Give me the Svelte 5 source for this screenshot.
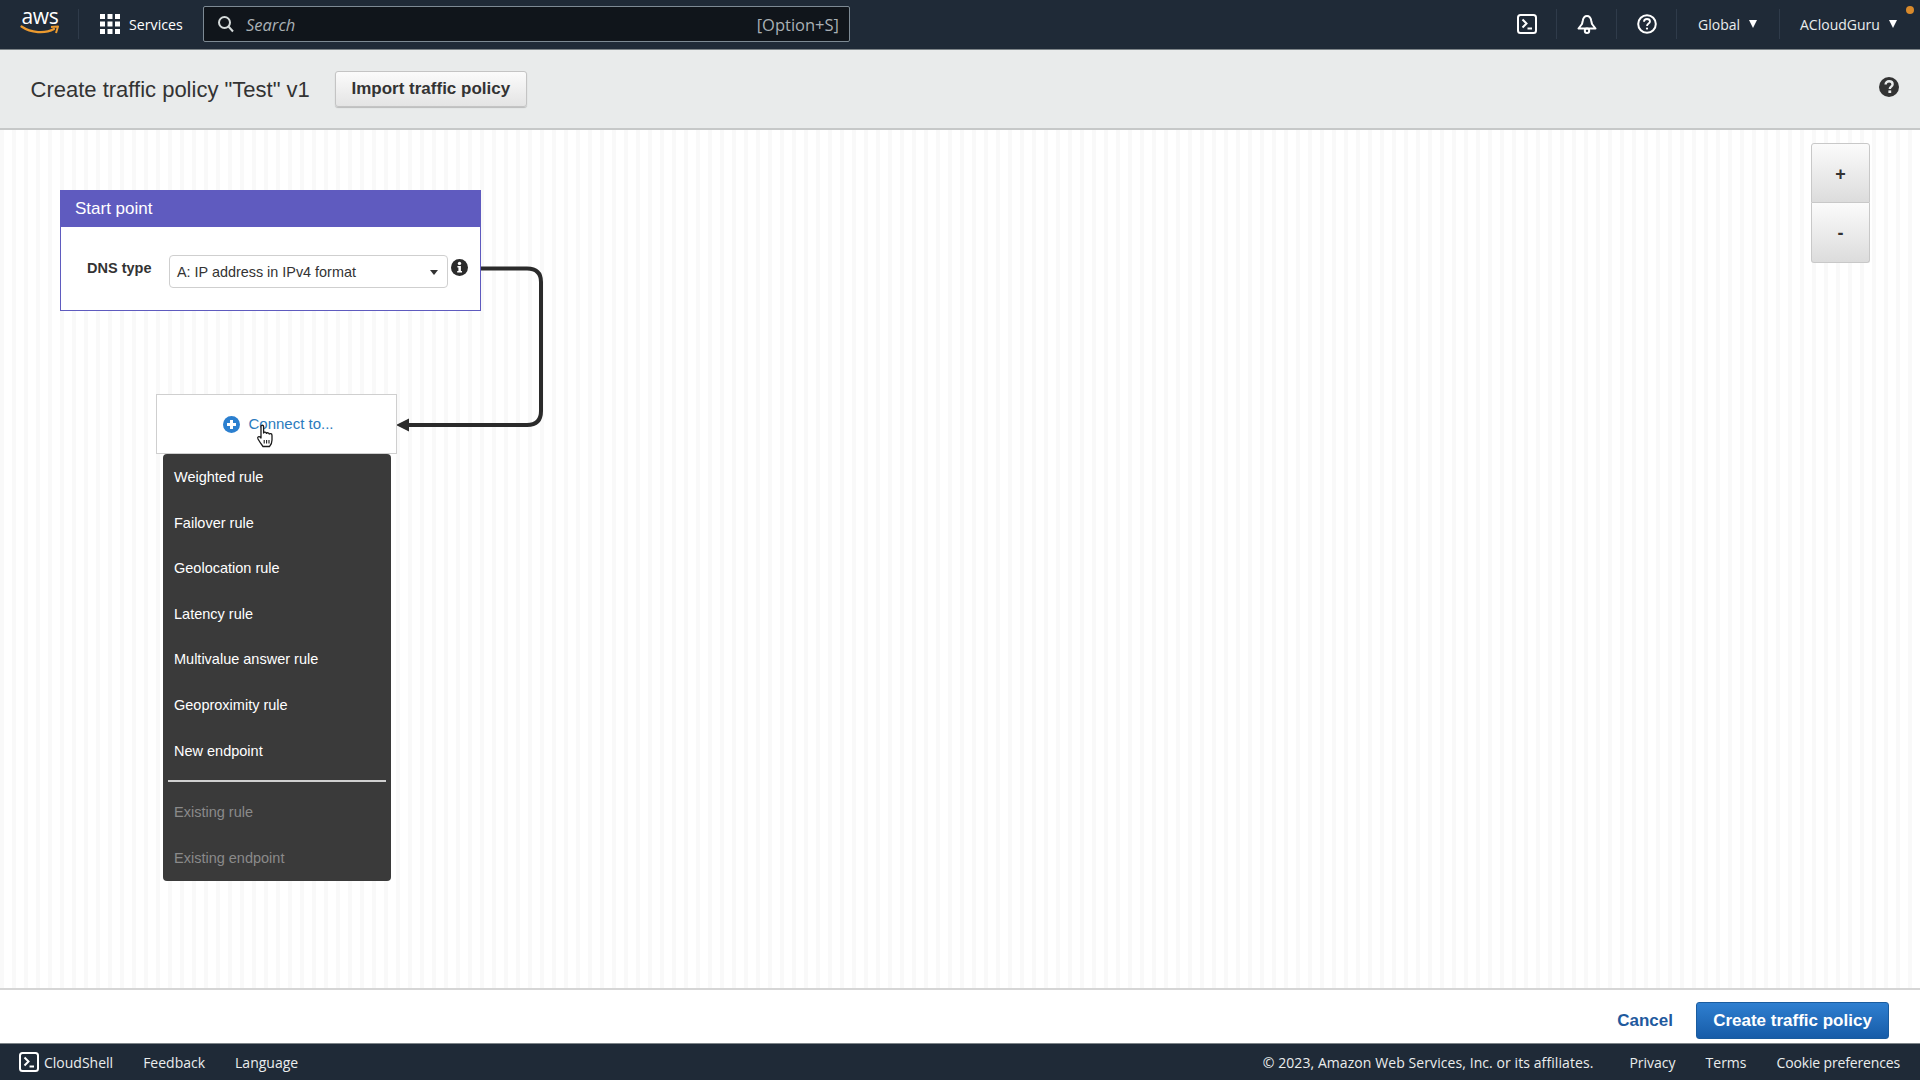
<script>
  const menuItems = [
    "Weighted rule",
    "Failover rule",
    "Geolocation rule",
    "Latency rule",
    "Multivalue answer rule",
    "Geoproximity rule",
    "New endpoint",
  ];
  const disabledItems = ["Existing rule", "Existing endpoint"];
</script>

<div class="page">
  <nav class="topbar">
    <div class="logo">
      <span class="logo-text">aws</span>
      <svg width="40" height="11" viewBox="0 0 40 11">
        <path d="M1.5 1.5 C11 8 25 9 34 4" fill="none" stroke="#ec9a2f" stroke-width="2.2" stroke-linecap="round" />
        <path d="M31 2 L38 1.5 L36 8" fill="none" stroke="#ec9a2f" stroke-width="2" stroke-linejoin="round" />
      </svg>
    </div>
    <span class="sep logo-sep"></span>
    <svg class="grid" width="20" height="20" viewBox="0 0 20 20" fill="#fff">
      {#each [0, 7.5, 15] as y}
        {#each [0, 7.5, 15] as x}
          <rect {x} {y} width="5" height="5" />
        {/each}
      {/each}
    </svg>
    <span class="services">Services</span>
    <div class="search">
      <svg width="18" height="18" viewBox="0 0 18 18" fill="none" stroke="#d5dbdb" stroke-width="2">
        <circle cx="7.5" cy="7.5" r="5.5" />
        <path d="M11.5 11.5 L16 16.5" />
      </svg>
      <span class="search-text">Search</span>
      <span class="shortcut">[Option+S]</span>
    </div>
    <div class="nav-right">
      <svg class="nav-icon" width="20" height="20" viewBox="0 0 20 20" fill="none" stroke="#fff" stroke-width="2">
        <rect x="1" y="1" width="18" height="18" rx="2.5" />
        <path d="M5.5 5.5 L9.5 9.5 L5.5 13.5" />
        <path d="M10.5 14.5 H15" />
      </svg>
      <span class="sep"></span>
      <svg class="nav-icon" width="20" height="20" viewBox="0 0 20 20" fill="none" stroke="#fff" stroke-width="2">
        <path d="M10 2 C7.5 2 6.2 4 5.7 7 L5 10 L1.5 14.5 H18.5 L15 10 L14.3 7 C13.8 4 12.5 2 10 2 Z" stroke-linejoin="round" />
        <circle cx="10" cy="16.8" r="2.2" />
      </svg>
      <span class="sep"></span>
      <svg class="nav-icon" width="20" height="20" viewBox="0 0 20 20" fill="none" stroke="#fff" stroke-width="2">
        <circle cx="10" cy="10" r="8.8" />
        <path d="M7 7.8 C7 5.8 8.4 5 10 5 C11.8 5 13 6 13 7.5 C13 9.6 10 9.6 10 12" stroke-width="1.8" />
        <circle cx="10" cy="14.6" r="1.1" fill="#fff" stroke="none" />
      </svg>
      <span class="sep"></span>
      <span class="nav-menu global">Global <i class="tri"></i></span>
      <span class="sep"></span>
      <span class="nav-menu account">ACloudGuru <i class="tri"></i></span>
    </div>
    <span class="dot"></span>
  </nav>

  <header class="head">
    <h1>Create traffic policy "Test" v1</h1>
    <button class="btn import">Import traffic policy</button>
    <svg class="head-help" width="20" height="20" viewBox="0 0 20 20">
      <circle cx="10" cy="10" r="10" fill="#333" />
      <path d="M6.6 7.6 C6.6 5.4 8.2 4.2 10.1 4.2 C12.1 4.2 13.6 5.5 13.6 7.2 C13.6 9.6 10.8 9.6 10.8 12" fill="none" stroke="#e9ebeb" stroke-width="2.4" />
      <rect x="9.4" y="13.4" width="2.8" height="2.6" fill="#e9ebeb" />
    </svg>
  </header>

  <main class="canvas">
    <svg class="wire" width="560" height="320" viewBox="0 0 560 320">
      <path d="M481 138.5 H527 Q541 138.5 541 152 V281 Q541 295 527 295 H406" fill="none" stroke="#2b2b2b" stroke-width="4" />
      <path d="M396 295 L409 288.5 V301.5 Z" fill="#2b2b2b" />
    </svg>

    <section class="start-node">
      <div class="node-title">Start point</div>
      <div class="node-body">
        <span class="dns-label">DNS type</span>
        <div class="select">
          <span>A: IP address in IPv4 format</span>
          <i class="caret"></i>
        </div>
        <svg class="info" width="17" height="17" viewBox="0 0 17 17">
          <circle cx="8.5" cy="8.5" r="8.5" fill="#2b2b2b" />
          <circle cx="8.5" cy="4.4" r="1.7" fill="#fff" />
          <path d="M6.4 7 H9.9 V12 H11 V13.6 H6.2 V12 H7.4 V8.6 H6.4 Z" fill="#fff" />
        </svg>
      </div>
    </section>

    <section class="connect-wrap">
      <div class="connect">
        <svg width="17" height="17" viewBox="0 0 17 17">
          <circle cx="8.5" cy="8.5" r="8.5" fill="#2b7fcf" />
          <path d="M8.5 4 V13 M4 8.5 H13" stroke="#fff" stroke-width="3" />
        </svg>
        <span>Connect to...</span>
        <svg class="hand" width="20" height="24" viewBox="0 0 20 24">
          <path d="M5 2.5 C5 0.8 7.6 0.8 7.6 2.5 V9 C8 7.8 10.2 8 10.4 9.4 C11 8.4 13 8.6 13.2 10 C14 9.2 16 9.6 16 11.4 V16 C16 19 14.5 21.5 13.5 22.5 H7 C5.5 20.5 4 18.5 2 15 C1 13 3 11.8 4.4 13.2 L5 14 Z" fill="#fff" stroke="#1a1a1a" stroke-width="1.3" stroke-linejoin="round" />
          <path d="M8.2 16 V19.5 M10.6 16 V19.5 M13 16 V19.5" stroke="#1a1a1a" stroke-width="1.1" />
        </svg>
      </div>
      <ul class="menu">
        {#each menuItems as item}
          <li>{item}</li>
        {/each}
        <li class="divider"></li>
        {#each disabledItems as item}
          <li class="disabled">{item}</li>
        {/each}
      </ul>
    </section>

    <div class="zoom">
      <button>+</button>
      <button>-</button>
    </div>
  </main>

  <div class="actions">
    <a class="cancel" href="#cancel">Cancel</a>
    <button class="btn primary">Create traffic policy</button>
  </div>

  <footer class="footer">
    <svg width="20" height="20" viewBox="0 0 20 20" fill="none" stroke="#fff" stroke-width="2">
      <rect x="1" y="1" width="18" height="18" rx="2.5" />
      <path d="M5.5 5.5 L9.5 9.5 L5.5 13.5" />
      <path d="M10.5 14.5 H15" />
    </svg>
    <span class="cloudshell">CloudShell</span>
    <span class="f-link">Feedback</span>
    <span class="f-link">Language</span>
    <span class="copyright">© 2023, Amazon Web Services, Inc. or its affiliates.</span>
    <span class="f-right">Privacy</span>
    <span class="f-right">Terms</span>
    <span class="f-right cookie">Cookie preferences</span>
  </footer>
</div>

<style>
  :global(body) {
    margin: 0;
    font-family: "Liberation Sans", Arial, sans-serif;
  }

  .page {
    width: 1920px;
    height: 1080px;
    display: flex;
    flex-direction: column;
    overflow: hidden;
    background: #fff;
  }

  /* top nav */
  .topbar {
    position: relative;
    height: 48px;
    padding-bottom: 1px;
    flex: none;
    display: flex;
    align-items: center;
    background: #1f2a37;
    border-bottom: 1px solid #7d8488;
    color: #fff;
    font-family: "Open Sans", sans-serif;
    font-size: 14px;
  }

  .logo {
    width: 40px;
    margin-left: 20px;
    display: flex;
    flex-direction: column;
    align-items: center;
  }

  .logo-text {
    font-size: 21px;
    line-height: 17px;
    letter-spacing: -0.3px;
    margin-top: -4px;
  }

  .sep {
    width: 1px;
    height: 30px;
    background: #2f3b4a;
  }

  .logo-sep {
    margin-left: 18px;
  }

  .grid {
    margin-left: 21px;
  }

  .services {
    margin-left: 9px;
    width: 54px;
    font-size: 14.2px;
    white-space: nowrap;
  }

  .search {
    margin-left: 20px;
    width: 647px;
    height: 36px;
    box-sizing: border-box;
    display: flex;
    align-items: center;
    background: #10151b;
    border: 1px solid #7d8a94;
    border-radius: 2px;
    padding: 0 10px 0 13px;
  }

  .search-text {
    margin-left: 11px;
    font-style: italic;
    font-size: 16.5px;
    color: #a9b0b5;
  }

  .shortcut {
    margin-left: auto;
    font-size: 16.5px;
    color: #a9b0b5;
  }

  .nav-right {
    margin-left: auto;
    display: flex;
    align-items: center;
  }

  .nav-right .sep {
    margin: 0 20px 0 19px;
  }

  .nav-menu {
    display: flex;
    align-items: center;
    white-space: nowrap;
    color: #eaeded;
  }

  .tri {
    display: inline-block;
    margin-left: 9px;
    width: 0;
    height: 0;
    border-left: 4.5px solid transparent;
    border-right: 4.5px solid transparent;
    border-top: 8px solid #fff;
  }

  .global {
    margin-left: 1px;
    width: 62px;
  }

  .nav-right .sep + .account {
    width: 96px;
    margin-right: 24px;
  }

  .dot {
    position: absolute;
    top: 6px;
    right: 6px;
    width: 8px;
    height: 8px;
    border-radius: 50%;
    background: #d98a2b;
  }

  /* page header */
  .head {
    height: 80px;
    flex: none;
    display: flex;
    align-items: center;
    box-sizing: border-box;
    background: #e9ebeb;
    border-bottom: 2px solid #c6c8c8;
    padding: 0 21px 0 30.5px;
    position: relative;
  }

  h1 {
    margin: 1px 0 0;
    font-size: 22px;
    font-weight: 400;
    color: #333;
    white-space: nowrap;
  }

  .btn {
    font-family: inherit;
    font-weight: 700;
    border-radius: 3px;
    cursor: pointer;
  }

  .import {
    margin-left: 25px;
    margin-top: -1px;
    width: 192px;
    height: 36px;
    font-size: 17px;
    color: #333;
    background: linear-gradient(#fbfbfb, #e4e4e4);
    border: 1px solid #c4c4c4;
    box-shadow: 0 1px 1px rgba(0, 0, 0, 0.2);
  }

  .head-help {
    margin-left: auto;
    margin-top: -5px;
  }

  /* canvas */
  .canvas {
    position: relative;
    flex: 1;
    min-height: 0;
    border-bottom: 2px solid #d5d5d5;
    background: repeating-linear-gradient(90deg, #f9f9f9 0 4px, #fff 4px 12px);
  }

  .wire {
    position: absolute;
    left: 0;
    top: 0;
  }

  .start-node {
    position: absolute;
    left: 60px;
    top: 60px;
    width: 421px;
    height: 121px;
    box-sizing: border-box;
    background: #fff;
    border: 1.5px solid #5f5bbf;
  }

  .node-title {
    height: 36px;
    line-height: 36px;
    padding-left: 14px;
    background: #5f5bbf;
    color: #fff;
    font-size: 17px;
  }

  .node-body {
    display: flex;
    align-items: center;
    padding: 28px 0 0 26px;
  }

  .dns-label {
    width: 82px;
    font-size: 14.5px;
    font-weight: 700;
    color: #333;
    margin-top: -8px;
  }

  .select {
    width: 279px;
    height: 33px;
    box-sizing: border-box;
    display: flex;
    align-items: center;
    justify-content: space-between;
    padding: 0 9px 0 7px;
    border: 1px solid #cfcfcf;
    border-radius: 4px;
    font-size: 14.4px;
    color: #333;
  }

  .caret {
    width: 0;
    height: 0;
    margin-top: 2px;
    border-left: 4.5px solid transparent;
    border-right: 4.5px solid transparent;
    border-top: 5px solid #333;
  }

  .info {
    margin: -8px 0 0 3px;
  }

  .connect-wrap {
    position: absolute;
    left: 156px;
    top: 264px;
    width: 241px;
    display: flex;
    flex-direction: column;
    align-items: center;
  }

  .connect {
    position: relative;
    width: 100%;
    height: 60px;
    box-sizing: border-box;
    display: flex;
    align-items: center;
    justify-content: center;
    gap: 8px;
    padding-left: 4px;
    background: #fff;
    border: 1px solid #cfcfcf;
    color: #2b7bbd;
    font-size: 15px;
  }

  .connect span {
    margin-top: -2px;
  }

  .hand {
    position: absolute;
    left: 99px;
    top: 29px;
  }

  .menu {
    width: 228px;
    height: 427px;
    box-sizing: border-box;
    margin: 0;
    padding: 1px 5px 0;
    list-style: none;
    background: #3a3a3a;
    border-radius: 4px;
    color: #fff;
    font-size: 14.5px;
  }

  .menu li {
    height: 45.6px;
    line-height: 45.6px;
    padding-left: 6.5px;
    white-space: nowrap;
  }

  .menu li.divider {
    height: 2px;
    padding: 0;
    margin: 6px 0 8px;
    background: #d0d0d0;
  }

  .menu li.disabled {
    color: #8a8a8a;
  }

  .zoom {
    position: absolute;
    right: 50px;
    top: 13px;
    width: 59px;
    display: flex;
    flex-direction: column;
  }

  .zoom button {
    height: 60px;
    padding: 2px 0 0;
    font-family: inherit;
    font-size: 18px;
    font-weight: 700;
    color: #333;
    background: linear-gradient(#fbfbfb, #dcdcdc);
    border: 1px solid #c8c8c8;
    border-radius: 3px 3px 0 0;
  }

  .zoom button + button {
    border-radius: 0 0 3px 3px;
    border-top: 0;
  }

  /* bottom */
  .actions {
    height: 53px;
    flex: none;
    display: flex;
    align-items: center;
    justify-content: flex-end;
    box-sizing: border-box;
    padding: 8px 31px 0 0;
    background: #fff;
  }

  .cancel {
    margin-right: 23px;
    font-size: 17px;
    font-weight: 700;
    color: #1f5a9e;
    text-decoration: none;
  }

  .primary {
    width: 193px;
    height: 37px;
    font-size: 17px;
    color: #fff;
    background: linear-gradient(#2f7fd0, #175ca8);
    border: 1px solid #1a5c9f;
  }

  .footer {
    height: 37px;
    flex: none;
    display: flex;
    align-items: center;
    box-sizing: border-box;
    padding: 0 20px 0 19px;
    background: #1f2a37;
    border-top: 1px solid #7d8488;
    color: #eaeded;
    font-family: "Open Sans", sans-serif;
    font-size: 14px;
  }

  .cloudshell {
    margin-left: 5px;
  }

  .f-link {
    margin-left: 30px;
  }

  .copyright {
    margin-left: auto;
    margin-right: 36px;
    letter-spacing: 0.08px;
  }

  .f-right {
    margin-left: 30px;
  }

  .copyright + .f-right {
    margin-left: 0;
  }

  .cookie {
    letter-spacing: -0.15px;
  }
</style>
